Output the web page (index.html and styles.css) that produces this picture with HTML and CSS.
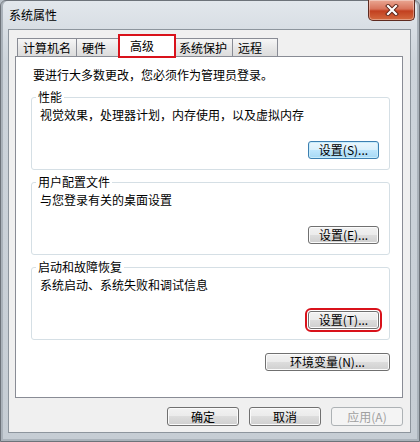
FILE: index.html
```html
<!DOCTYPE html>
<html lang="zh-CN">
<head>
  <meta charset="UTF-8" />
  <title>系统属性</title>
  <link rel="stylesheet" href="styles.css">
</head>
<body>

  <div class="window">
    <div class="titlebar">
      <span class="title">系统属性</span>
      <div class="close">
        <svg width="14" height="12" viewBox="0 0 14 12">
          <path d="M3 2 L11 10 M11 2 L3 10" stroke="#5b2418" stroke-width="4" stroke-linecap="square"/>
          <path d="M3 2 L11 10 M11 2 L3 10" stroke="#fff" stroke-width="2.2" stroke-linecap="square"/>
        </svg>
      </div>
    </div>

    <div class="client">
      <div class="tabs">
        <div class="tab">计算机名</div>
        <div class="tab">硬件</div>
        <div class="tab active mark">高级</div>
        <div class="tab">系统保护</div>
        <div class="tab">远程</div>
      </div>

      <div class="panel">
        <p class="note">要进行大多数更改，您必须作为管理员登录。</p>

        <fieldset class="group">
          <legend>性能</legend>
          <p>视觉效果，处理器计划，内存使用，以及虚拟内存</p>
          <div class="row"><button class="btn focus">设置(S)...</button></div>
        </fieldset>

        <fieldset class="group">
          <legend>用户配置文件</legend>
          <p>与您登录有关的桌面设置</p>
          <div class="row"><button class="btn">设置(E)...</button></div>
        </fieldset>

        <fieldset class="group">
          <legend>启动和故障恢复</legend>
          <p>系统启动、系统失败和调试信息</p>
          <div class="row"><button class="btn mark">设置(T)...</button></div>
        </fieldset>

        <div class="row env"><button class="btn wide">环境变量(N)...</button></div>
      </div>

      <div class="footer">
        <button class="btn big">确定</button>
        <button class="btn big">取消</button>
        <button class="btn big" disabled>应用(A)</button>
      </div>
    </div>
  </div>

</body>
</html>
```

FILE: styles.css
```css
body {
  margin: 0;
  padding: 0;
  font-family: "Noto Sans CJK SC", "Liberation Sans", sans-serif;
  font-size: 12px;
  color: #000;
  background: #b9c1c9;
}
p {
  margin: 0;
}
.window {
  width: 420px;
  height: 442px;
  box-sizing: border-box;
  padding: 0 9px 9px 8px;
  display: flex;
  flex-direction: column;
  background: linear-gradient(#e2e7ec, #cdd4db 60px, #c6cdd4);
  border: 1px solid #6d737a;
  border-radius: 6px 6px 0 0;
  box-shadow: inset 2px 0 0 #aab2ba, inset -2px 0 0 #aab2ba, inset 0 -2px 0 #aab2ba;
}
.titlebar {
  height: 29px;
  display: flex;
  align-items: flex-start;
}
.title {
  margin-top: 6px;
  line-height: 16px;
}
.close {
  margin-left: auto;
  margin-right: -5px;
  margin-top: -1px;
  width: 47px;
  height: 21px;
  box-sizing: border-box;
  border: 1px solid #5e2a20;
  border-top: none;
  border-radius: 0 0 5px 5px;
  background: linear-gradient(#eaa793, #d8735b 45%, #c2401f 55%, #d46a3f);
  box-shadow: inset 0 0 0 1px rgba(255,255,255,0.35);
  display: flex;
  align-items: center;
  justify-content: center;
}
.client {
  flex: 1;
  background: #f0f0f0;
  padding: 8px 7px 6px 6px;
  display: flex;
  flex-direction: column;
  box-shadow: 0 0 0 1px #8d959d;
}
.tabs {
  display: flex;
  align-items: flex-end;
  height: 18px;
  padding-left: 2px;
  position: relative;
  z-index: 1;
}
.tab {
  height: 17px;
  line-height: 17px;
  padding: 0 5px;
  min-width: 34px;
  border: 1px solid #898c95;
  border-bottom: none;
  margin-right: -1px;
  background: linear-gradient(#f6f6f6, #e8e8e8 50%, #dcdcdc);
}
.tab.active {
  height: 21px;
  line-height: 19px;
  margin: 0 -2px -1px -2px;
  padding: 0 10px;
  background: #fff;
  position: relative;
  z-index: 2;
}
.mark {
  outline: 2px solid #d9121b;
  outline-offset: 1px;
}
.tab.mark {
  outline-offset: -1px;
}
.panel {
  flex: 1;
  background: #fff;
  border: 1px solid #898c95;
  padding: 10px 12px 0 15px;
}
.note {
  line-height: 16px;
  padding-left: 2px;
}
.group {
  margin: 5px 0 0 0;
  padding: 2px 10px 10px 8px;
  border: 1px solid #d5dfe5;
  border-radius: 3px;
}
.note + .group {
  margin-top: 6px;
}
.group + .group {
  margin-top: 4px;
}
.group legend {
  padding: 0 2px;
  margin-left: -4px;
  line-height: 16px;
}
.group p {
  line-height: 16px;
}
.row {
  display: flex;
  justify-content: flex-end;
  margin-top: 18px;
}
.env {
  margin-top: 13px;
}
.btn {
  font-family: inherit;
  font-size: 12px;
  color: #000;
  width: 71px;
  height: 18px;
  padding: 0;
  line-height: 16px;
  border: 1px solid #707070;
  border-radius: 3px;
  background: linear-gradient(#f2f2f2, #ebebeb 50%, #dddddd 50%, #cfcfcf);
  box-shadow: inset 0 0 0 1px #fbfbfb;
}
.btn.focus {
  border-color: #3c7fb1;
  background: linear-gradient(#eaf6fd, #d9f0fc 50%, #bee6fd 50%, #a7d9f5);
  box-shadow: inset 0 0 0 1px #c8ecfb;
}
.btn.wide {
  width: 125px;
}
.btn.big {
  width: 72px;
  height: 19px;
}
.btn:disabled {
  color: #a0a0a0;
  border-color: #adb2b5;
  background: #f4f4f4;
  box-shadow: none;
}
.footer {
  display: flex;
  justify-content: flex-end;
  gap: 10px;
  margin-top: 9px;
}
```
